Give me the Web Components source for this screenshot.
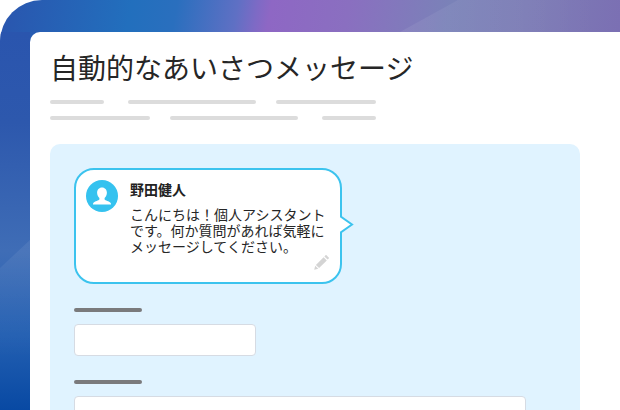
<!DOCTYPE html>
<html lang="ja">
<head>
<meta charset="utf-8">
<title>自動的なあいさつメッセージ</title>
<style>
  html, body { margin: 0; height: 100%; background: #fff; overflow: hidden; }
  body { font-family: "Noto Sans CJK JP", "Liberation Sans", sans-serif; color: #222; }
</style>
</head>
<body>

<app-shell>
  <settings-card title-text="自動的なあいさつメッセージ">
    <message-bubble name="野田健人">こんにちは！個人アシスタントです。何か質問があれば気軽にメッセージしてください。</message-bubble>
    <form-field width="182px"></form-field>
    <form-field width="452px"></form-field>
  </settings-card>
</app-shell>

<script>
class AppShell extends HTMLElement {
  constructor () {
    super()
    this.attachShadow({ mode: 'open' }).innerHTML = `
      <style>
        :host {
          display: block;
          position: relative;
          width: 620px;
          height: 410px;
          box-sizing: border-box;
          padding: 32px 0 0 30px;
          overflow: hidden;
          border-top-left-radius: 42px;
          background: linear-gradient(100deg, #2a55ae 0, #226fbd 130px, #2a6fbe 175px, #5f70c4 235px, #7e6ac5 255px, #8e67c4 268px, #8a6fc0 345px, #7a82b8 445px, #7d7db6 520px, #7b6fb3 620px);
        }
        .decor { position: absolute; left: 0; top: 0; }
        ::slotted(*) { position: relative; }
      </style>
      <svg class="decor" width="620" height="410" viewBox="0 0 620 410">
        <defs>
          <linearGradient id="strip" x1="0" y1="0" x2="0" y2="1">
            <stop offset="0" stop-color="#2a55ae"/>
            <stop offset=".24" stop-color="#2d58ad"/>
            <stop offset=".58" stop-color="#3f6db6"/>
            <stop offset=".8" stop-color="#2460b2"/>
            <stop offset="1" stop-color="#0849a3"/>
          </linearGradient>
          <linearGradient id="wedge" x1="0" y1="0" x2="0" y2="1">
            <stop offset="0" stop-color="#fff" stop-opacity=".07"/>
            <stop offset=".7" stop-color="#fff" stop-opacity="0"/>
          </linearGradient>
          <linearGradient id="ray" x1="0" y1="0" x2="1" y2="0">
            <stop offset="0" stop-color="#fff" stop-opacity=".07"/>
            <stop offset="1" stop-color="#fff" stop-opacity="0"/>
          </linearGradient>
        </defs>
        <rect x="0" y="32" width="30" height="378" fill="url(#strip)"/>
        <path d="M0 268 L30 240 V410 H0 Z" fill="url(#wedge)"/>
        <path d="M400 32 L458 0 H600 V32 Z" fill="url(#ray)"/>
      </svg>
      <slot></slot>
    `
  }
}

class SettingsCard extends HTMLElement {
  constructor () {
    super()
    this.attachShadow({ mode: 'open' }).innerHTML = `
      <style>
        :host {
          display: block;
          box-sizing: border-box;
          width: 590px;
          height: 378px;
          padding: 0 0 0 20px;
          background: #fff;
          border-top-left-radius: 10px;
          overflow: hidden;
        }
        h1 {
          margin: 0;
          padding: 16px 0 0 0;
          height: 68px;
          box-sizing: border-box;
          font: 400 28px/38px "Noto Sans CJK JP", sans-serif;
          color: #262626;
          white-space: nowrap;
        }
        .row { display: flex; height: 4px; margin-bottom: 12px; }
        .row i { display: block; height: 4px; border-radius: 2px; background: #dcdcdc; }
        .panel {
          width: 530px;
          margin-top: 24px;
          box-sizing: border-box;
          padding: 24px 24px 0;
          height: 300px;
          background: #e0f3ff;
          border-radius: 10px 10px 0 0;
        }
      </style>
      <h1></h1>
      <div class="row">
        <i style="width:54px"></i><i style="width:128px;margin-left:24px"></i><i style="width:100px;margin-left:20px"></i>
      </div>
      <div class="row">
        <i style="width:100px"></i><i style="width:128px;margin-left:20px"></i><i style="width:54px;margin-left:24px"></i>
      </div>
      <div class="panel"><slot></slot></div>
    `
    this.shadowRoot.querySelector('h1').textContent = this.getAttribute('title-text')
  }
}

class MessageBubble extends HTMLElement {
  constructor () {
    super()
    this.attachShadow({ mode: 'open' }).innerHTML = `
      <style>
        :host {
          display: block;
          position: relative;
          box-sizing: border-box;
          width: 268px;
          height: 116px;
          margin-bottom: 24px;
          padding: 10px 10px 0 10px;
          background: #fff;
          border: 2px solid #3cc3ee;
          border-radius: 20px;
        }
        .wrap { display: flex; gap: 12px; }
        .avatar { flex: none; width: 32px; height: 32px; display: block; }
        .text { margin-top: -1px; }
        .name { font: 700 14px/20px "Noto Sans CJK JP", sans-serif; color: #222; }
        .msg {
          margin-top: 7px;
          width: 198px;
          font: 400 14px/16px "Noto Sans CJK JP", sans-serif;
          color: #262626;
        }
        .tail { position: absolute; left: 264px; top: 45px; }
        .pencil { position: absolute; right: 10px; bottom: 12px; }
      </style>
      <div class="wrap">
        <svg class="avatar" viewBox="0 0 32 32">
          <circle cx="16" cy="16" r="16" fill="#35c2ef"/>
          <path d="M16 7.500c-3 0-4.900 2.300-4.900 5.300 0 2.200 1 4 2.300 5.100v1.500c-.5 1-4.600 1.700-5.900 3.300-.4.5-.5 1.100-.5 1.800h18c0-.7-.1-1.300-.5-1.800-1.300-1.600-5.400-2.300-5.900-3.300v-1.500c1.300-1.100 2.300-2.900 2.300-5.100 0-3-1.900-5.300-4.900-5.300z" fill="#fff"/>
        </svg>
        <div class="text">
          <div class="name"></div>
          <div class="msg"><slot></slot></div>
        </div>
      </div>
      <svg class="tail" width="14" height="20" viewBox="0 0 14 20">
        <path d="M0 1 L12 9.500 L0 18 Z" fill="#fff"/>
        <path d="M0 1 L12 9.500 L0 18" fill="none" stroke="#3cc3ee" stroke-width="2"/>
      </svg>
      <svg class="pencil" width="16" height="16" viewBox="0 0 16 16">
        <path d="M12 .8l3.200 3.200-1.600 1.600-3.200-3.200zM9.600 3.200l3.200 3.200-7.700 7.700-3.200-3.200zM1.200 11.700l3.100 3.100-4.100 1z" fill="#d4d4d4"/>
      </svg>
    `
    this.shadowRoot.querySelector('.name').textContent = this.getAttribute('name')
  }
}

class FormField extends HTMLElement {
  constructor () {
    super()
    this.attachShadow({ mode: 'open' }).innerHTML = `
      <style>
        :host { display: block; margin-bottom: 24px; }
        .label { width: 68px; height: 4px; border-radius: 2px; background: #7a7a7c; margin-bottom: 12px; }
        .input {
          box-sizing: border-box;
          height: 32px;
          background: #fff;
          border: 1px solid #d6dbe3;
          border-radius: 4px;
        }
      </style>
      <div class="label"></div>
      <div class="input"></div>
    `
    this.shadowRoot.querySelector('.input').style.width = this.getAttribute('width')
  }
}

customElements.define('app-shell', AppShell)
customElements.define('settings-card', SettingsCard)
customElements.define('message-bubble', MessageBubble)
customElements.define('form-field', FormField)
</script>
</body>
</html>
